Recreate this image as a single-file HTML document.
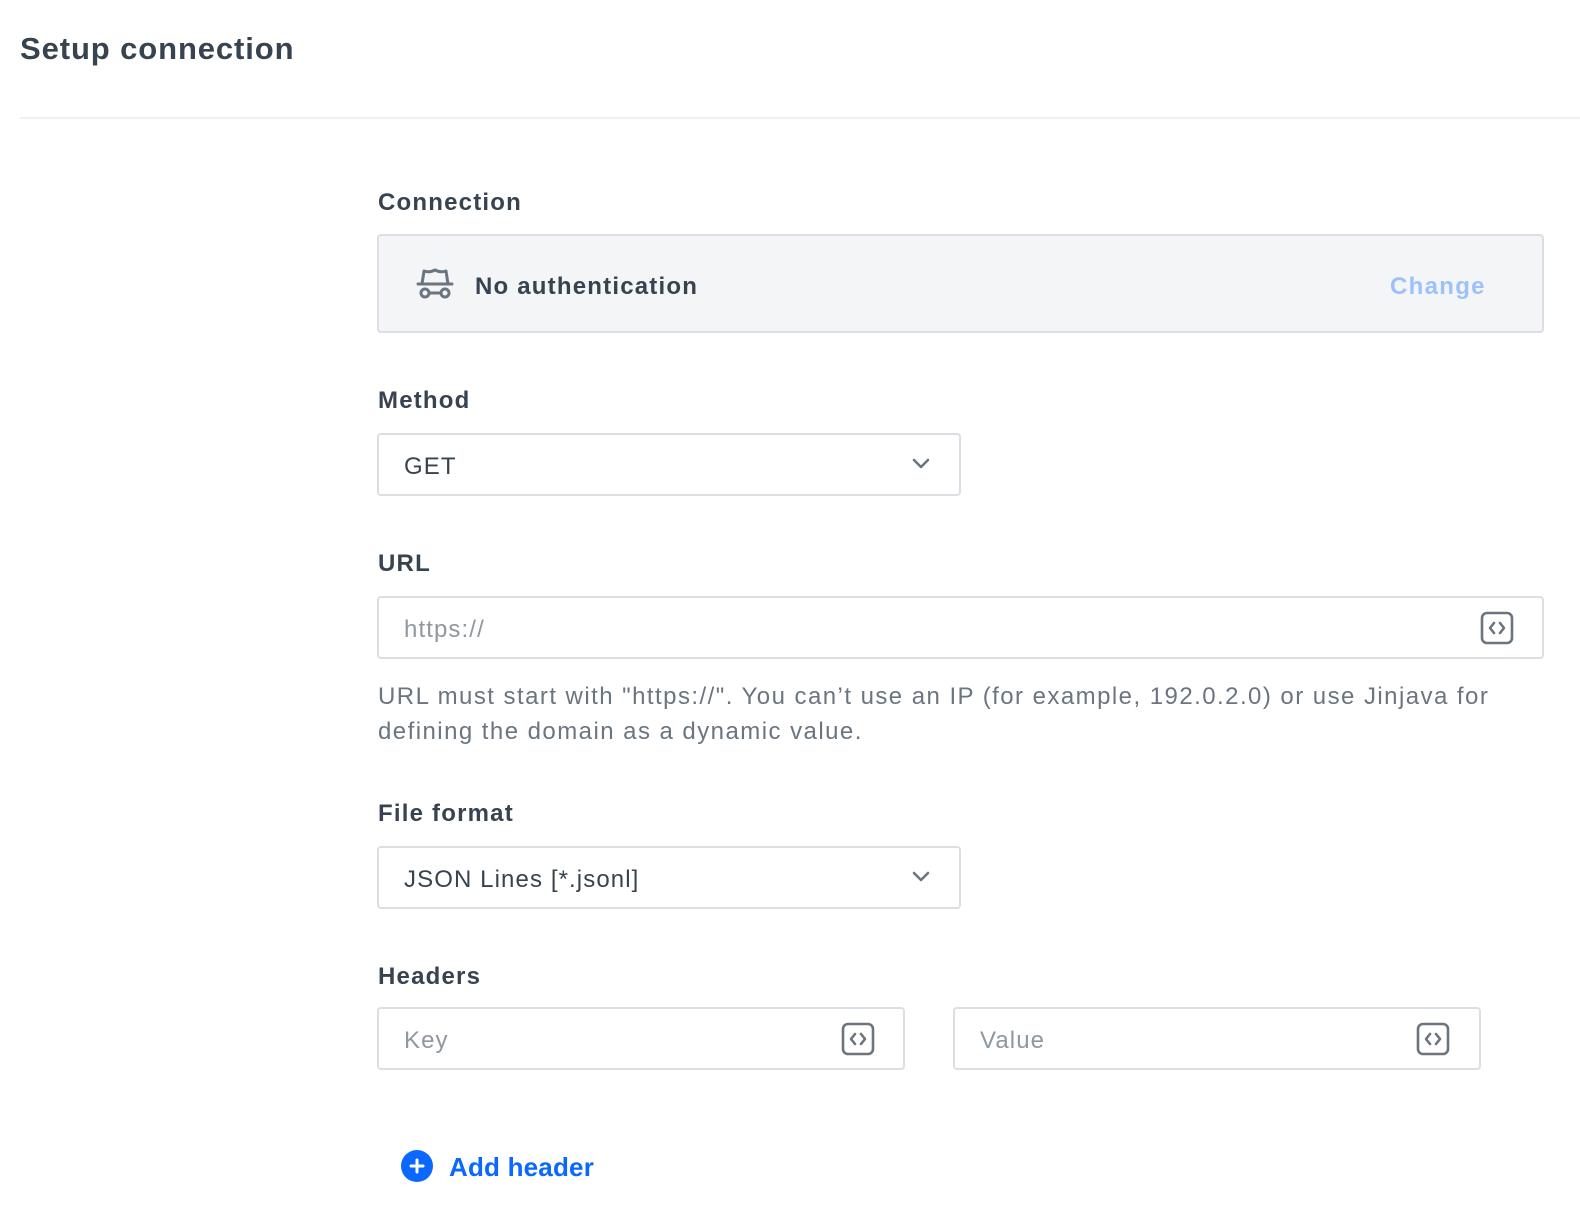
<!DOCTYPE html>
<html><head><meta charset="utf-8"><style>
*{box-sizing:border-box;margin:0;padding:0}
body{width:1580px;height:1216px;background:#fff;font-family:"Liberation Sans",sans-serif;color:#384350;position:relative;overflow:hidden}
.a{position:absolute}
.title{left:20px;top:29px;font-size:31px;font-weight:bold;line-height:40px;color:#384350;letter-spacing:0.9px}
.hr{left:20px;top:117px;width:1560px;height:2px;background:#eef0f2}
.lbl{left:378px;font-size:24px;font-weight:bold;line-height:30px;color:#384350;letter-spacing:1.2px}
.box{border:2px solid #dbdfe3;border-radius:4px;background:#fff}
.txt{font-size:24px;line-height:30px;color:#384350;letter-spacing:1.1px}
.ph{color:#8f979f}
svg{position:absolute}
</style></head><body>
<div class="a title">Setup connection</div>
<div class="a hr"></div>

<div class="a lbl" style="top:188px">Connection</div>
<div class="a box" style="left:377px;top:234px;width:1167px;height:99px;background:#f3f5f7"></div>
<svg style="left:416px;top:266px" width="38" height="36" viewBox="0 0 38 36" fill="none" stroke="#6b7580" stroke-width="3" stroke-linecap="round" stroke-linejoin="round">
<path d="M6 18 L8 5 Q13 7 19 4 Q25 7 30 5 L32 18"/><path d="M2 18 H36"/><circle cx="9" cy="27" r="4"/><circle cx="29" cy="27" r="4"/><path d="M13 27 H25"/></svg>
<div class="a txt" style="left:475px;top:272px;font-weight:bold;letter-spacing:1.2px">No authentication</div>
<div class="a txt" style="left:1390px;top:272px;font-weight:bold;color:#9ec1fb;letter-spacing:1.3px">Change</div>

<div class="a lbl" style="top:386px">Method</div>
<div class="a box" style="left:377px;top:433px;width:584px;height:63px"></div>
<div class="a txt" style="left:404px;top:452px">GET</div>
<svg style="left:911px;top:457px" width="20" height="14" viewBox="0 0 20 14" fill="none" stroke="#6b7580" stroke-width="2.6" stroke-linecap="round" stroke-linejoin="round"><path d="M3 3 L10 10 L17 3"/></svg>

<div class="a lbl" style="top:549px">URL</div>
<div class="a box" style="left:377px;top:596px;width:1167px;height:63px"></div>
<div class="a txt ph" style="left:404px;top:615px">https://</div>
<svg style="left:1480px;top:611px" width="34" height="34" viewBox="0 0 34 34" fill="none" stroke="#6b7580" stroke-width="2.6" stroke-linecap="round" stroke-linejoin="round"><rect x="2" y="2" width="30" height="30" rx="5"/><path d="M14 12 L10 17 L14 22 M20 12 L24 17 L20 22"/></svg>
<div class="a txt" style="left:378px;top:679px;color:#6b7580;white-space:nowrap;line-height:35px;letter-spacing:1.45px">URL must start with "https://". You can’t use an IP (for example, 192.0.2.0) or use Jinjava for<br>defining the domain as a dynamic value.</div>

<div class="a lbl" style="top:799px">File format</div>
<div class="a box" style="left:377px;top:846px;width:584px;height:63px"></div>
<div class="a txt" style="left:404px;top:865px">JSON Lines [*.jsonl]</div>
<svg style="left:911px;top:870px" width="20" height="14" viewBox="0 0 20 14" fill="none" stroke="#6b7580" stroke-width="2.6" stroke-linecap="round" stroke-linejoin="round"><path d="M3 3 L10 10 L17 3"/></svg>

<div class="a lbl" style="top:962px">Headers</div>
<div class="a box" style="left:377px;top:1007px;width:528px;height:63px"></div>
<div class="a txt ph" style="left:404px;top:1026px">Key</div>
<svg style="left:841px;top:1022px" width="34" height="34" viewBox="0 0 34 34" fill="none" stroke="#6b7580" stroke-width="2.6" stroke-linecap="round" stroke-linejoin="round"><rect x="2" y="2" width="30" height="30" rx="5"/><path d="M14 12 L10 17 L14 22 M20 12 L24 17 L20 22"/></svg>
<div class="a box" style="left:953px;top:1007px;width:528px;height:63px"></div>
<div class="a txt ph" style="left:980px;top:1026px">Value</div>
<svg style="left:1416px;top:1022px" width="34" height="34" viewBox="0 0 34 34" fill="none" stroke="#6b7580" stroke-width="2.6" stroke-linecap="round" stroke-linejoin="round"><rect x="2" y="2" width="30" height="30" rx="5"/><path d="M14 12 L10 17 L14 22 M20 12 L24 17 L20 22"/></svg>

<svg style="left:401px;top:1150px" width="32" height="32" viewBox="0 0 32 32"><circle cx="16" cy="16" r="16" fill="#0b68ff"/><path d="M16 10 V22 M10 16 H22" stroke="#fff" stroke-width="3" stroke-linecap="round"/></svg>
<div class="a txt" style="left:449px;top:1152px;font-weight:bold;color:#0b68ff;font-size:26px;letter-spacing:0.2px">Add header</div>
</body></html>
